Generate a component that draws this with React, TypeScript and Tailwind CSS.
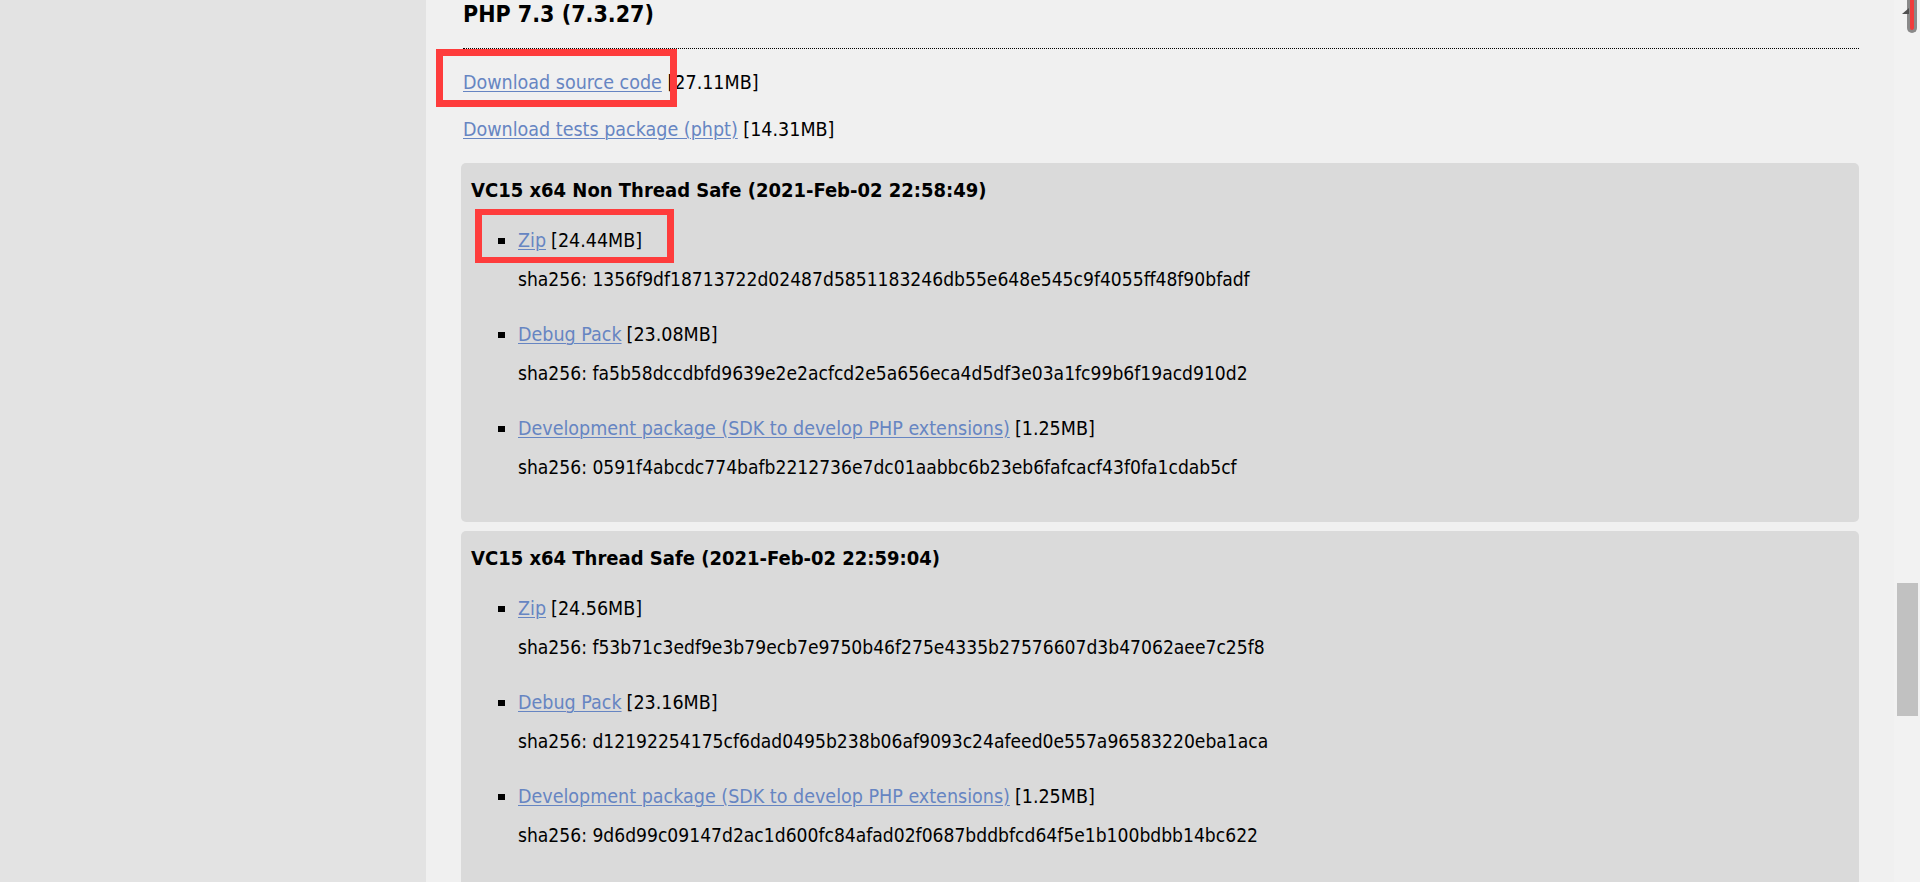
const builds = [
  {
    title: 'VC15 x64 Non Thread Safe (2021-Feb-02 22:58:49)',
    files: [
      { label: 'Zip', size: '24.44MB', sha: '1356f9df18713722d02487d5851183246db55e648e545c9f4055ff48f90bfadf' },
      { label: 'Debug Pack', size: '23.08MB', sha: 'fa5b58dccdbfd9639e2e2acfcd2e5a656eca4d5df3e03a1fc99b6f19acd910d2' },
      {
        label: 'Development package (SDK to develop PHP extensions)',
        size: '1.25MB',
        sha: '0591f4abcdc774bafb2212736e7dc01aabbc6b23eb6fafcacf43f0fa1cdab5cf',
      },
    ],
  },
  {
    title: 'VC15 x64 Thread Safe (2021-Feb-02 22:59:04)',
    files: [
      { label: 'Zip', size: '24.56MB', sha: 'f53b71c3edf9e3b79ecb7e9750b46f275e4335b27576607d3b47062aee7c25f8' },
      { label: 'Debug Pack', size: '23.16MB', sha: 'd12192254175cf6dad0495b238b06af9093c24afeed0e557a96583220eba1aca' },
      {
        label: 'Development package (SDK to develop PHP extensions)',
        size: '1.25MB',
        sha: '9d6d99c09147d2ac1d600fc84afad02f0687bddbfcd64f5e1b100bdbb14bc622',
      },
    ],
  },
];

const linkCls = 'text-[#6685c2] underline underline-offset-2 decoration-1';

const BuildBox = ({ build }: { build: (typeof builds)[number] }) => (
  <div className="rounded-[5px] bg-[#dadada] pl-[10px] pt-[15px] pb-[42px]">
    <h3 className="text-[20px] font-bold leading-[24px]">{build.title}</h3>
    <ul className="ml-[27px] mt-[27px] flex flex-col gap-[31px]">
      {build.files.map((f) => (
        <li key={f.label}>
          <div className="flex items-center leading-[24px]">
            <span className="mr-[13px] h-[6px] w-[7px] shrink-0 bg-black" />
            <a href="#" className={linkCls}>
              {f.label}
            </a>
            <span className="ml-[5px]">[{f.size}]</span>
          </div>
          <div className="mt-[15px] pl-[20px] text-[19.1px] leading-[24px]">sha256: {f.sha}</div>
        </li>
      ))}
    </ul>
  </div>
);

export default function App() {
  return (
    <div className="relative flex h-[882px] w-[1920px] overflow-hidden bg-[#f0f0f0] font-['DejaVu_Sans_Condensed','Liberation_Sans',sans-serif] text-[19.5px] text-black">
      {/* left sidebar */}
      <div className="w-[426px] shrink-0 bg-[#e3e3e3]" />

      <main className="flex-1 pl-[35px] pr-[35px]">
        <h2 className="pl-[2px] text-[23px] font-bold leading-[28px]">PHP 7.3 (7.3.27)</h2>
        <div className="ml-[2px] mt-[20px] border-t border-dotted border-black" />

        <p className="mt-[22px] pl-[2px] leading-[24px]">
          <a href="#" className={linkCls}>
            Download source code
          </a>{' '}
          [27.11MB]
        </p>
        <p className="mt-[23px] pl-[2px] leading-[24px]">
          <a href="#" className={linkCls}>
            Download tests package (phpt)
          </a>{' '}
          [14.31MB]
        </p>

        <div className="mt-[21px] flex flex-col gap-[9px]">
          {builds.map((b) => (
            <BuildBox key={b.title} build={b} />
          ))}
        </div>
      </main>

      {/* scrollbar */}
      <div className="w-[26px] shrink-0 bg-[#f2f2f2] pl-[3px] pt-[583px]">
        <div className="h-[133px] w-[21px] bg-[#c1c1c1]" />
      </div>

      {/* annotation marks */}
      <div className="absolute left-[436px] top-[49px] h-[58px] w-[241px] border-x-[7px] border-y-[7px] border-[#fe3c3c]" />
      <div className="absolute left-[475px] top-[209px] h-[54px] w-[199px] border-x-[7px] border-y-[6px] border-[#fe3c3c]" />
      <div className="absolute right-[3px] top-0 h-[33px] w-[10px] rounded-b-[5px] border-x-[3px] border-b-[3px] border-[#8a8a8a] bg-[#f03c3c]" />
      <svg className="absolute left-[1902px] top-[8px]" width="7" height="6" viewBox="0 0 7 6">
        <polygon points="7,0 7,6 0,6" fill="#505050" />
      </svg>
    </div>
  );
}
